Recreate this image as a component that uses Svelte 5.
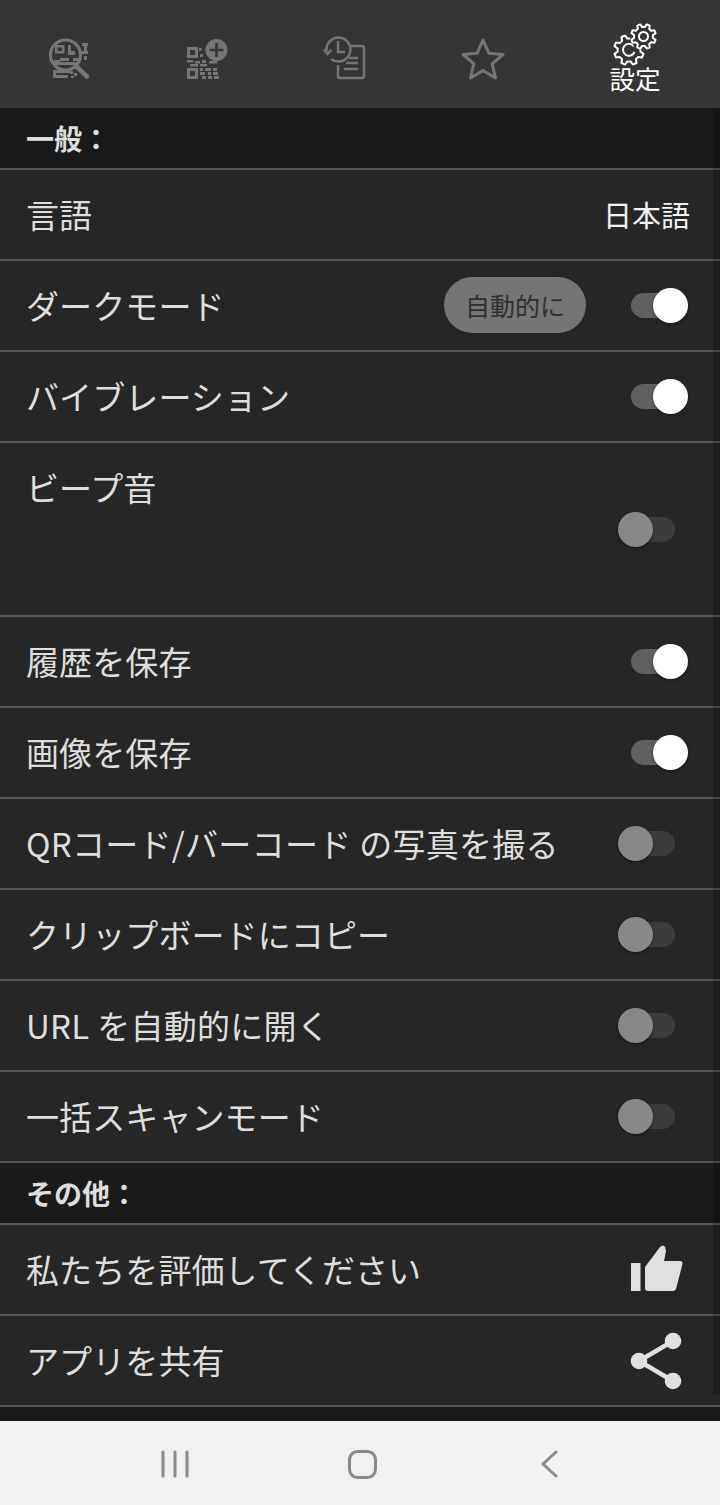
<script>
  const general = [
    { label: '言語', value: '日本語' },
    { label: 'ダークモード', on: true, auto: true },
    { label: 'バイブレーション', on: true },
    { label: 'ビープ音', on: false, tall: true },
    { label: '履歴を保存', on: true },
    { label: '画像を保存', on: true },
    { label: 'QRコード/バーコード の写真を撮る', on: false, latin: true },
    { label: 'クリップボードにコピー', on: false },
    { label: 'URL を自動的に開く', on: false, latin: true },
    { label: '一括スキャンモード', on: false }
  ]

  // qr specks for the tab icons, [x, y, w, h]
  const scanBits = [
    [15, 15, 9, 2.5], [15, 15, 2.5, 8], [15, 21, 9, 2.5], [22, 15, 2.5, 8],
    [28, 15, 3, 10], [31, 21, 4, 4], [14, 30, 6, 5], [20, 28, 9, 3], [20, 32, 18, 3], [33, 28, 5, 3],
    [42, 13, 6, 3], [44, 16, 3, 5], [42, 21, 6, 3], [44, 26, 3, 4],
    [13, 40, 17, 3], [13, 43, 3, 5], [16, 45, 12, 3], [30, 41, 3, 3], [34, 43, 3, 3], [31, 46, 3, 2]
  ]
  const addBits = [
    [7, 30, 6, 2.5], [15, 31, 5, 2.5], [10, 34, 8, 2.5], [22, 30, 4, 3], [20, 34, 7, 2.5], [29, 31, 8, 2.5],
    [20, 38, 3, 3], [25, 38, 6, 3], [33, 38, 4, 3], [20, 42, 5, 3], [28, 42, 3, 3], [33, 42, 5, 3],
    [22, 46, 4, 3], [28, 46, 4, 3], [34, 46, 5, 3], [20, 24, 3, 3], [19, 18, 2.5, 3]
  ]

  // outline of a cog with n teeth, round about cx,cy
  function gear(cx, cy, outer, root, n) {
    const pts = []
    const step = (Math.PI * 2) / n
    for (let i = 0; i < n; i++) {
      const a = i * step + step / 2
      const at = (r, d) => `${(cx + r * Math.cos(a + d)).toFixed(2)} ${(cy + r * Math.sin(a + d)).toFixed(2)}`
      pts.push(at(root, -step * 0.32), at(outer, -step * 0.17), at(outer, step * 0.17), at(root, step * 0.32))
    }
    return 'M' + pts.join('L') + 'Z'
  }
</script>

<div class="screen">
  <header class="tabs">
    <div class="tab tab1">
      <svg width="60" height="56" viewBox="0 0 60 56" fill="none" stroke="#757575">
        <g fill="#757575" stroke="none">
          {#each scanBits as [x, y, w, h]}
            <rect {x} {y} width={w} height={h} />
          {/each}
        </g>
        <circle cx="25.500" cy="25" r="15" stroke-width="3.200" />
        <path d="M36 36 L47 46.500" stroke-width="4.500" stroke-linecap="round" />
      </svg>
    </div>
    <div class="tab tab2">
      <svg width="60" height="56" viewBox="0 0 60 56">
        <g fill="#757575">
          <path fill-rule="evenodd" d="M7 17h11v11H7z M10 20v5h5v-5z" />
          <path fill-rule="evenodd" d="M7 38h11v11H7z M10 41v5h5v-5z" />
          {#each addBits as [x, y, w, h]}
            <rect {x} {y} width={w} height={h} />
          {/each}
        </g>
        <circle cx="36.500" cy="20" r="11" fill="#757575" />
        <path d="M36.500 13v14M29.500 20h14" stroke="#353535" stroke-width="2.600" />
      </svg>
    </div>
    <div class="tab tab3">
      <svg width="60" height="56" viewBox="0 0 60 56" fill="none" stroke="#757575" stroke-width="2.500">
        <path d="M11.500 21 A12 12 0 1 1 16 29" />
        <path d="M9 19.500 L12.500 24 L16.500 19.500" />
        <path d="M23 11 V22 H30" />
        <path d="M36 16 H47 Q49 16 49 18 V46 Q49 48 47 48 H25 Q23 48 23 46 V35" />
        <path d="M34 28 H43 M31 33 H43 M29 39 H43" />
      </svg>
    </div>
    <div class="tab tab4">
      <svg width="44" height="44" viewBox="0 0 44 44" fill="none">
        <path d="M22 3l5.800 13.200 14.200 1.300-10.800 9.400 3.300 14.100L22 33.600 9.500 41l3.300-14.100L2 17.500l14.200-1.300z" stroke="#757575" stroke-width="3" stroke-linejoin="round" />
      </svg>
    </div>
    <div class="tab tab5">
      <svg width="60" height="48" viewBox="0 0 60 48" fill="none" stroke="#fff" stroke-width="2" stroke-linejoin="round">
        <defs>
          <mask id="cog-gap" maskUnits="userSpaceOnUse" x="0" y="0" width="60" height="48">
            <rect width="60" height="48" fill="#fff" />
            <circle cx="38.500" cy="18.500" r="14.500" fill="#000" />
          </mask>
        </defs>
        <path d={gear(38.5, 18.5, 12.5, 9.5, 8)} />
        <circle cx="38.500" cy="18.500" r="4.500" />
        <g mask="url(#cog-gap)">
          <path d={gear(24, 32, 15, 11.5, 8)} />
          <path d="M29 28.500 A6 6 0 1 0 29.500 34" />
        </g>
      </svg>
      <span>設定</span>
    </div>
  </header>

  <main class="content">
    <div class="section">一般：</div>
    {#each general as row}
      <div class="row" class:tall={row.tall}>
        <span class="label" class:latin={row.latin}>{row.label}</span>
        {#if row.value}
          <span class="value">{row.value}</span>
        {/if}
        {#if row.auto}
          <span class="pill">自動的に</span>
        {/if}
        {#if row.on !== undefined}
          <span class="switch" class:on={row.on}><i></i></span>
        {/if}
      </div>
    {/each}

    <div class="section">その他：</div>
    <div class="row">
      <span class="label">私たちを評価してください</span>
      <svg class="end-icon" width="54" height="50" viewBox="0 0 54 50" fill="#e0e0e0">
        <rect x="1" y="18" width="9.500" height="28" />
        <path d="M15 22 L30 2 Q33 -1 35 2 L36 6 L34 16 H50 Q53 16 52.500 19 L46 44 Q45 46 43 46 H18 Q15 46 15 43 Z" />
      </svg>
    </div>
    <div class="row">
      <span class="label">アプリを共有</span>
      <svg class="end-icon" width="54" height="58" viewBox="0 0 54 58" fill="#e0e0e0" stroke="#e0e0e0">
        <path d="M9 29 L43 9 M9 29 L43 49" stroke-width="4.500" fill="none" />
        <circle cx="9" cy="29" r="8.300" stroke="none" />
        <circle cx="43" cy="9" r="8.300" stroke="none" />
        <circle cx="43" cy="49" r="8.300" stroke="none" />
      </svg>
    </div>
    <div class="scrollbar"></div>
  </main>

  <nav class="sysnav">
    <svg width="28" height="28" viewBox="0 0 28 28" stroke="#8a8a8a" stroke-width="3" stroke-linecap="round">
      <path d="M2 2v24M14 2v24M26 2v24" />
    </svg>
    <svg width="30" height="30" viewBox="0 0 30 30" fill="none" stroke="#8a8a8a" stroke-width="3">
      <rect x="1.500" y="1.500" width="26" height="26" rx="8" />
    </svg>
    <svg width="28" height="28" viewBox="0 0 28 28" fill="none" stroke="#8a8a8a" stroke-width="3" stroke-linecap="round" stroke-linejoin="round">
      <path d="M21 2 L8 14 L21 26" />
    </svg>
  </nav>
</div>

<style>
  :global(body) {
    margin: 0;
    background: #1a1a1a;
  }
  .screen {
    width: 720px;
    height: 1505px;
    display: flex;
    flex-direction: column;
    font-family: 'Noto Sans CJK JP', 'Noto Sans', sans-serif;
    overflow: hidden;
  }
  .tabs {
    height: 108px;
    flex: none;
    background: #353535;
    position: relative;
  }
  .tab {
    position: absolute;
    display: flex;
    flex-direction: column;
    align-items: center;
  }
  .tab svg {
    display: block;
  }
  .tab1 { left: 40px; top: 30px; }
  .tab2 { left: 180px; top: 30px; }
  .tab3 { left: 315px; top: 30px; }
  .tab4 { left: 461px; top: 37px; }
  .tab5 { left: 605px; top: 18px; width: 60px; }
  .tab5 span {
    color: #fff;
    font-size: 25.500px;
    line-height: 28px;
    white-space: nowrap;
    margin-top: -2px;
  }
  .content {
    flex: 1;
    background: #1a1a1a;
    position: relative;
  }
  .section {
    height: 60px;
    background: #1a1a1a;
    border-bottom: 2px solid #555;
    padding-left: 26px;
    display: flex;
    align-items: center;
    color: #dedede;
    font-size: 28px;
    font-weight: 700;
    line-height: 56px;
  }
  .row {
    height: 89px;
    background: #262626;
    border-bottom: 2px solid #555;
    padding: 0 32px 0 26px;
    display: flex;
    align-items: center;
    color: #dedede;
  }
  .row.tall {
    height: 172px;
    align-items: flex-start;
    position: relative;
  }
  .row.tall .label {
    margin-top: 21px;
  }
  .row.tall .switch {
    position: absolute;
    right: 45px;
    top: 74px;
    margin-right: 0;
  }
  .label {
    font-size: 33px;
    letter-spacing: 0.1px;
    line-height: 46px;
    flex: 1;
    white-space: nowrap;
    margin-bottom: 2px;
  }
  .label.latin {
    letter-spacing: 0.28px;
  }
  .value {
    color: #f2f2f2;
    font-size: 29px;
    margin-right: -2px;
    margin-bottom: 2px;
  }
  .pill {
    width: 142px;
    height: 56px;
    border-radius: 28px;
    background: #757575;
    color: #2f2f2f;
    font-size: 25px;
    display: flex;
    align-items: center;
    justify-content: center;
    margin-right: 45px;
    margin-bottom: 2px;
  }
  .switch {
    width: 44px;
    height: 25px;
    position: relative;
    border-radius: 13px;
    background: #3c3c3c;
    margin-right: 13px;
    flex: none;
  }
  .switch i {
    position: absolute;
    width: 35px;
    height: 35px;
    border-radius: 50%;
    background: #888;
    left: -13px;
    top: -5px;
    box-shadow: 0 1px 3px rgba(0, 0, 0, 0.5);
  }
  .switch.on {
    background: #606060;
  }
  .switch.on i {
    background: #fff;
    left: 22px;
  }
  .end-icon {
    flex: none;
    margin-right: 4px;
  }
  .scrollbar {
    position: absolute;
    right: 0;
    top: 0;
    width: 7px;
    height: 1287px;
    background: rgba(0, 0, 0, 0.2);
  }
  .sysnav {
    height: 84px;
    flex: none;
    background: #f1f1f1;
    position: relative;
  }
  .sysnav svg {
    position: absolute;
    top: 29px;
  }
  .sysnav svg:nth-child(1) { left: 161px; }
  .sysnav svg:nth-child(2) { left: 348px; }
  .sysnav svg:nth-child(3) { left: 535px; }
</style>
